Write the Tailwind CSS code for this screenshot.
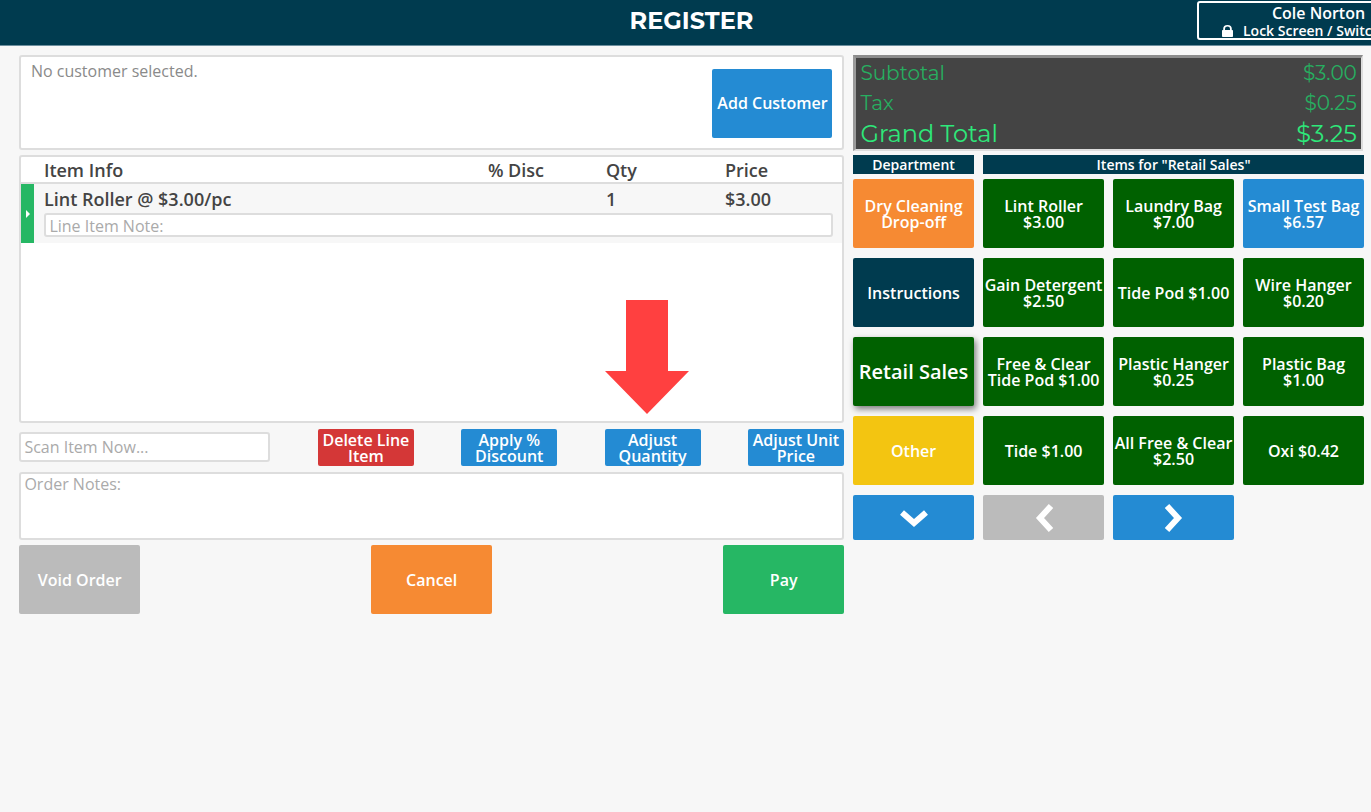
<!DOCTYPE html>
<html lang="en">
<head>
    <meta charset="UTF-8">
    <title>Register</title>
    <script src="https://cdn.jsdelivr.net/npm/@tailwindcss/browser@4"></script>
</head>
<body class="relative h-[812px] w-[1371px] overflow-hidden bg-[#f7f7f7] font-['Open_Sans',sans-serif] text-[#444]">
    <!-- top bar -->
    <header class="relative h-[46px] border-b border-[#6d8f9e] bg-[#003b4f] text-white">
        <p class="pt-[5px] pl-[12px] text-center font-['Montserrat','Inter',sans-serif] text-[24px] leading-[31px] font-bold">REGISTER</p>
        <div class="absolute top-px left-[1197px] h-[39px] w-[190px] rounded-[3px] border-2 border-white pl-[23px] text-center font-semibold">
            <p class="w-[193px] text-[16px] leading-[20px] whitespace-nowrap">Cole Norton</p>
            <p class="flex w-[190px] items-center gap-[10px] pt-px text-[14px] leading-[14px] whitespace-nowrap">
                <svg class="h-[12px] w-[11px] shrink-0 fill-white" viewBox="0 0 11 12"><path d="M1.2 5V3.800a4.300 3.800 0 0 1 8.600 0V5h.4a.8.8 0 0 1 .8.8v5.400a.8.8 0 0 1-.8.8H.8a.8.8 0 0 1-.8-.8V5.800a.8.8 0 0 1 .8-.8zM3 5h5V3.800a2.500 2.200 0 0 0-5 0z"/></svg>
                Lock Screen / Switch User
            </p>
        </div>
    </header>

    <main class="flex items-start pt-[9px] pl-[19.4px]">
        <!-- left column -->
        <section class="w-[824.6px]">
            <div class="flex h-[95px] justify-between rounded-[3px] border-2 border-[#ddd] bg-white pr-[9.500px]">
                <p class="pt-[4px] pl-[9.500px] text-[16px] leading-[21px] text-[#8a8a8a]">No customer selected.</p>
                <button class="mt-[12px] h-[69px] w-[120px] rounded-[2px] bg-[#248bd3] pb-[2px] text-[16px] font-semibold text-white">Add Customer</button>
            </div>

            <div class="mt-[5px] h-[268px] rounded-[3px] border-2 border-[#ddd] bg-white">
                <div class="flex h-[27px] items-center border-b-2 border-[#ddd] pt-px pl-[22.5px] text-[18px] font-semibold">
                    <span class="w-[444px]">Item Info</span>
                    <span class="w-[118px]">% Disc</span>
                    <span class="w-[119px]">Qty</span>
                    <span>Price</span>
                </div>
                <div class="flex h-[59px] bg-[#f7f7f7]">
                    <div class="flex w-[13px] items-center justify-center bg-[#26b764]">
                        <span class="h-0 w-0 border-y-[4px] border-l-[4px] border-y-transparent border-l-white"></span>
                    </div>
                    <div class="flex-1 pl-[9.5px]">
                        <div class="flex h-[29px] items-center pt-px text-[18px] font-semibold">
                            <span class="w-[444px]">Lint Roller @ $3.00/pc</span>
                            <span class="w-[118px]"></span>
                            <span class="w-[119px]">1</span>
                            <span>$3.00</span>
                        </div>
                        <input class="h-[24px] w-[789px] rounded-[3px] border-2 border-[#ddd] bg-white pt-px pl-[3.500px] text-[16px] placeholder:text-[#aaa]" placeholder="Line Item Note:">
                    </div>
                </div>
            </div>

            <div class="mt-[6px] flex h-[37px]">
                <input class="mt-[3px] h-[30px] w-[250.5px] rounded-[3px] border-2 border-[#ddd] bg-white pl-[3px] text-[16px] placeholder:text-[#aaa]" placeholder="Scan Item Now...">
                <div class="ml-[48px] flex w-[526px] justify-between text-[16px] leading-[16px] font-semibold text-white">
                    <button class="w-[96px] rounded-[2px] bg-[#d43737]">Delete Line Item</button>
                    <button class="w-[96px] rounded-[2px] bg-[#248bd3]">Apply % Discount</button>
                    <button class="w-[96px] rounded-[2px] bg-[#248bd3]">Adjust Quantity</button>
                    <button class="w-[96px] rounded-[2px] bg-[#248bd3]">Adjust Unit Price</button>
                </div>
            </div>

            <textarea class="mt-[5.5px] block h-[68.5px] w-full resize-none rounded-[3px] border-2 border-[#ddd] bg-white pl-[3px] text-[16px] leading-[21px] placeholder:text-[#aaa]" placeholder="Order Notes:"></textarea>

            <div class="mt-[5px] flex justify-between text-[16px] font-semibold text-white">
                <button class="h-[69px] w-[120.6px] rounded-[2px] bg-[#bbb]">Void Order</button>
                <button class="h-[69px] w-[120.6px] rounded-[2px] bg-[#f68a33]">Cancel</button>
                <button class="h-[69px] w-[120.6px] rounded-[2px] bg-[#26b764]">Pay</button>
            </div>
        </section>

        <!-- right column -->
        <section class="ml-[9.4px] w-[511px]">
            <div class="flex h-[96px] w-[509.5px] flex-col border-t-[3px] border-r-2 border-b-2 border-l-[3px] border-t-[#8c8c8c] border-r-[#ddd] border-b-[#ddd] border-l-[#9a9a9a] bg-[#444] px-[4px] font-['Montserrat','Inter',sans-serif] font-normal text-[#27ae60]">
                <div class="flex h-[29px] items-center justify-between pt-[1px] text-[20px]"><span>Subtotal</span><span>$3.00</span></div>
                <div class="flex h-[30px] items-center justify-between pt-[1px] text-[20px]"><span>Tax</span><span>$0.25</span></div>
                <div class="flex h-[32px] items-center justify-between pt-[1px] text-[24px] text-[#2ee87a]"><span>Grand Total</span><span>$3.25</span></div>
            </div>

            <div class="mt-[4px] grid grid-cols-[120.4px_120.4px_120.4px_120.4px] gap-x-[9.6px] gap-y-[10px] text-center text-[16px] leading-[16px] font-semibold text-white">
                <div class="-mb-[5px] h-[19px] bg-[#003b4f] text-[14px] leading-[19px]">Department</div>
                <div class="col-span-3 -mb-[5px] h-[19px] bg-[#003b4f] text-[14px] leading-[19px]">Items for "Retail Sales"</div>

                <button class="h-[69px] rounded-[2px] bg-[#f68a33]">Dry Cleaning Drop-off</button>
                <button class="h-[69px] rounded-[2px] bg-[#006100]">Lint Roller<br>$3.00</button>
                <button class="h-[69px] rounded-[2px] bg-[#006100]">Laundry Bag<br>$7.00</button>
                <button class="h-[69px] rounded-[2px] bg-[#248bd3] whitespace-nowrap">Small Test Bag<br>$6.57</button>

                <button class="h-[69px] rounded-[2px] bg-[#003b4f]">Instructions</button>
                <button class="h-[69px] rounded-[2px] bg-[#006100] whitespace-nowrap">Gain Detergent<br>$2.50</button>
                <button class="h-[69px] rounded-[2px] bg-[#006100] whitespace-nowrap">Tide Pod $1.00</button>
                <button class="h-[69px] rounded-[2px] bg-[#006100]">Wire Hanger<br>$0.20</button>

                <button class="h-[69px] rounded-[2px] bg-[#006100] text-[20px] whitespace-nowrap shadow-[2px_3px_6px_rgba(0,0,0,0.5)]">Retail Sales</button>
                <button class="h-[69px] rounded-[2px] bg-[#006100] whitespace-nowrap">Free &amp; Clear<br>Tide Pod $1.00</button>
                <button class="h-[69px] rounded-[2px] bg-[#006100] whitespace-nowrap">Plastic Hanger<br>$0.25</button>
                <button class="h-[69px] rounded-[2px] bg-[#006100]">Plastic Bag<br>$1.00</button>

                <button class="h-[69px] rounded-[2px] bg-[#f3c511]">Other</button>
                <button class="h-[69px] rounded-[2px] bg-[#006100]">Tide $1.00</button>
                <button class="h-[69px] rounded-[2px] bg-[#006100] whitespace-nowrap">All Free &amp; Clear<br>$2.50</button>
                <button class="h-[69px] rounded-[2px] bg-[#006100]">Oxi $0.42</button>

                <button class="flex h-[45px] items-center justify-center rounded-[2px] bg-[#248bd3]">
                    <svg class="h-[18px] w-[30px]" viewBox="0 0 30 18"><path d="M3 3.500l12 10.500L27 3.500" fill="none" stroke="white" stroke-width="6"/></svg>
                </button>
                <button class="flex h-[45px] items-center justify-center rounded-[2px] bg-[#bbb]">
                    <svg class="h-[30px] w-[20px]" viewBox="0 0 20 30"><path d="M17 3L6 15l11 12" fill="none" stroke="white" stroke-width="6"/></svg>
                </button>
                <button class="flex h-[45px] items-center justify-center rounded-[2px] bg-[#248bd3]">
                    <svg class="h-[30px] w-[20px]" viewBox="0 0 20 30"><path d="M3 3l11 12L3 27" fill="none" stroke="white" stroke-width="6"/></svg>
                </button>
            </div>
        </section>
    </main>

    <!-- annotation arrow over the screenshot -->
    <svg class="absolute top-[300px] left-[605px] h-[114px] w-[84px]" viewBox="0 0 84 114"><path d="M21 0h42v71h21L42 114 0 71h21z" fill="#ff4040"/></svg>
</body>
</html>
